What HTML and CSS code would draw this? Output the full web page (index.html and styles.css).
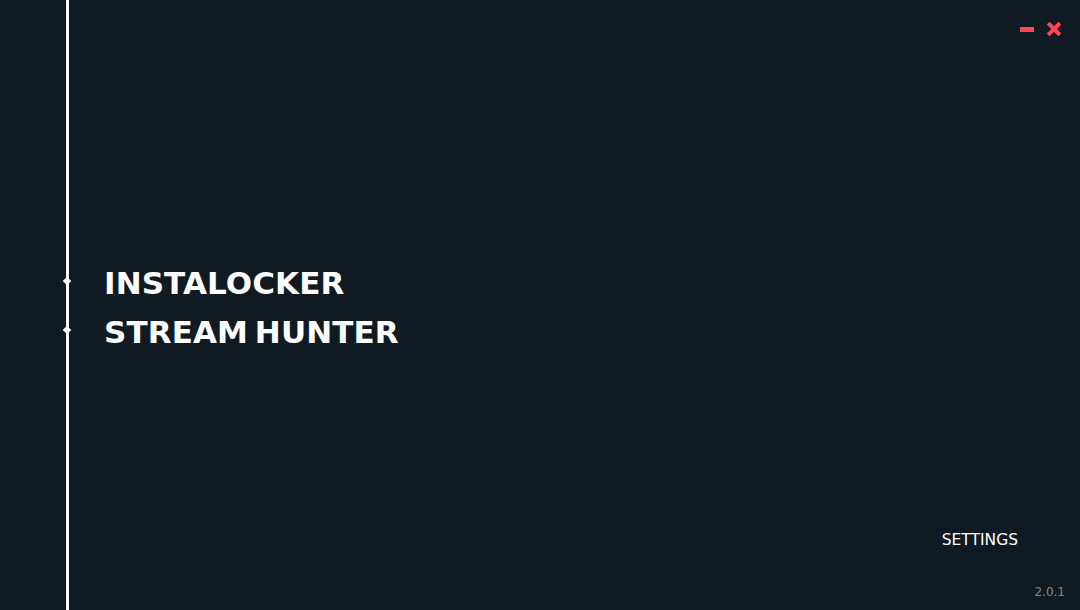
FILE: index.html
```html
<!DOCTYPE html>
<html>
<head>
<meta charset="utf-8">
<link rel="stylesheet" href="styles.css">
</head>
<body>
<div class="app">
  <div class="rail">
    <div class="line"></div>
  </div>
  <div class="main">
    <div class="controls">
      <svg class="ctl" width="14" height="14" viewBox="0 0 14 14"><rect x="0" y="5" width="14" height="5" fill="#ff4655"/></svg>
      <svg class="ctl" width="14" height="14" viewBox="0 0 14 14"><path d="M2.5 2.5 L11.5 11.5 M11.5 2.5 L2.5 11.5" stroke="#ff4655" stroke-width="4" stroke-linecap="square"/></svg>
    </div>
    <nav class="menu">
      <div class="item"><span class="dot"></span>INSTALOCKER</div>
      <div class="item"><span class="dot"></span>STREAM HUNTER</div>
    </nav>
    <div class="footer">
      <div class="settings">SETTINGS</div>
      <div class="version">2.0.1</div>
    </div>
  </div>
</div>
</body>
</html>
```
FILE: styles.css
```css
html, body {
  margin: 0;
  padding: 0;
  width: 1080px;
  height: 610px;
  overflow: hidden;
  background: #0f1a23;
  font-family: "DejaVu Sans", Verdana, sans-serif;
  color: #fff;
}
.app {
  display: flex;
  height: 610px;
}
.rail {
  width: 69px;
  display: flex;
  justify-content: flex-end;
}
.line {
  width: 3px;
  height: 100%;
  background: #fff;
}
.main {
  flex: 1;
  display: flex;
  flex-direction: column;
}
.controls {
  display: flex;
  justify-content: flex-end;
  gap: 13px;
  padding: 22px 19px 0 0;
  height: 14px;
}
.menu {
  margin-top: 229px;
  padding-left: 35px;
  display: flex;
  flex-direction: column;
  gap: 13px;
}
.item {
  position: relative;
  font-weight: bold;
  font-size: 31px;
  line-height: 36px;
  letter-spacing: 0.1px;
  word-spacing: -4px;
}
.dot {
  position: absolute;
  left: -40px;
  top: 13px;
  width: 6px;
  height: 6px;
  background: #fff;
  transform: rotate(45deg);
}
.footer {
  margin-top: auto;
  display: flex;
  flex-direction: column;
  align-items: flex-end;
  padding: 0 15px 11px 0;
}
.settings {
  font-size: 15.5px;
  line-height: 20px;
  margin-right: 47px;
  margin-bottom: 35px;
}
.version {
  font-size: 12px;
  line-height: 14px;
  color: #7f888f;
}
```
